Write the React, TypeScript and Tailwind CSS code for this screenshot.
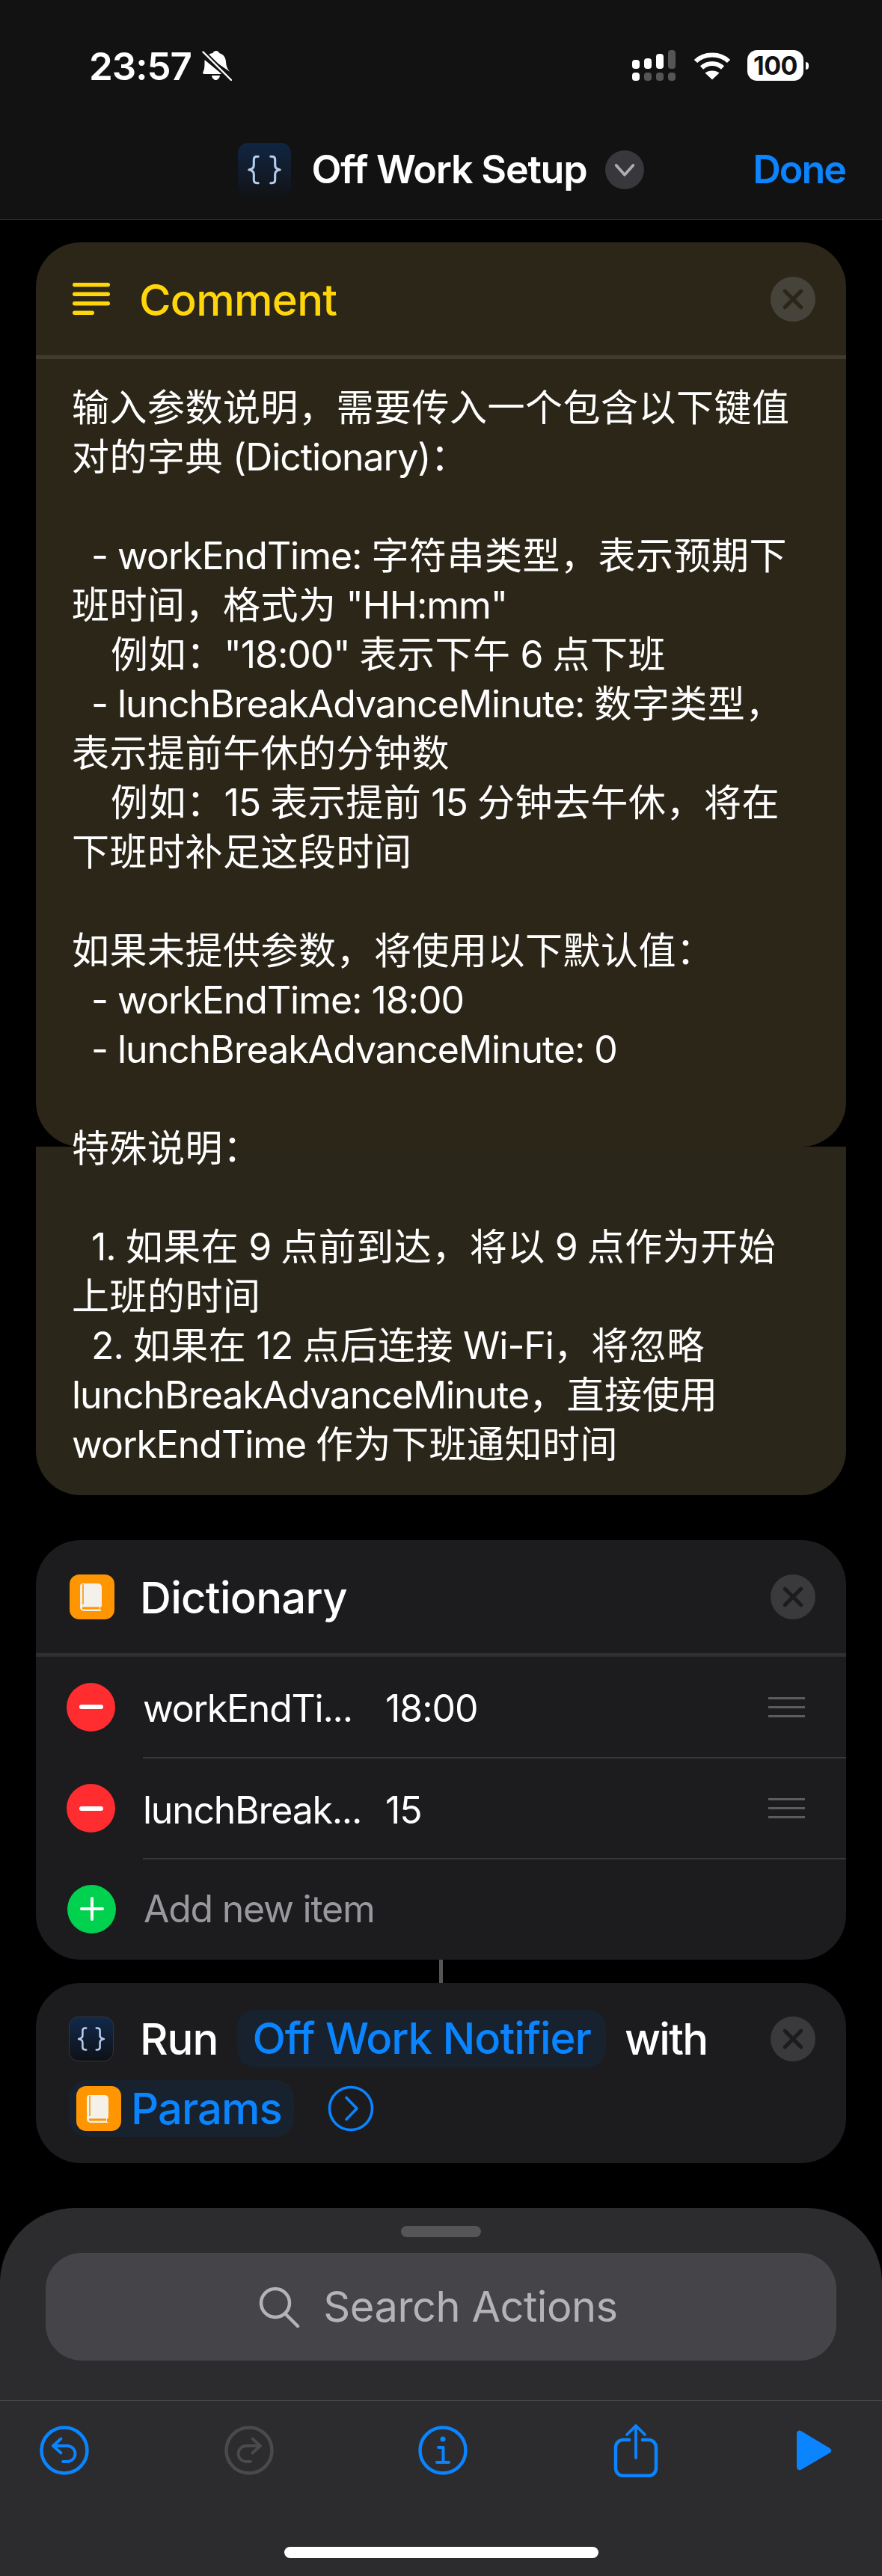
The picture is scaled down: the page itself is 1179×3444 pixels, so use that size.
import React from 'react';

const topLines = [
  '输入参数说明，需要传入一个包含以下键值',
  '对的字典 (Dictionary)：',
  '',
  '  - workEndTime: 字符串类型，表示预期下',
  '班时间，格式为 "HH:mm"',
  '    例如："18:00" 表示下午 6 点下班',
  '  - lunchBreakAdvanceMinute: 数字类型，',
  '表示提前午休的分钟数',
  '    例如：15 表示提前 15 分钟去午休，将在',
  '下班时补足这段时间',
  '',
  '如果未提供参数，将使用以下默认值：',
  '  - workEndTime: 18:00',
  '  - lunchBreakAdvanceMinute: 0',
  '',
];

const bottomLines = [
  '特殊说明：',
  '',
  '  1. 如果在 9 点前到达，将以 9 点作为开始',
  '上班的时间',
  '  2. 如果在 12 点后连接 Wi-Fi，将忽略',
  'lunchBreakAdvanceMinute，直接使用',
  'workEndTime 作为下班通知时间',
];

// Chinese runs sit a little wider than Latin ones in the original font
const TextLine = ({ text }: { text: string }) => (
  <div className="h-[66px] whitespace-pre text-[50px] leading-[66px] text-white">
    {text.split(/([\u3000-\u9fff\uff00-\uffef]+)/).map((part, index) => (
      <span key={index} className={index % 2 === 1 ? 'tracking-[0.5px]' : 'tracking-[-1.05px]'}>
        {part}
      </span>
    ))}
  </div>
);

const CloseButton = ({ circle, cross }: { circle: string; cross: string }) => (
  <div className={`flex h-[60px] w-[60px] shrink-0 items-center justify-center rounded-full ${circle}`}>
    <svg viewBox="0 0 24 24" className="h-[60px] w-[60px]" fill="none" stroke={cross} strokeWidth="2.1" strokeLinecap="round">
      <path d="M7.7 7.7 16.3 16.3M16.3 7.7 7.7 16.3" />
    </svg>
  </div>
);

const BracesIcon = ({ className }: { className: string }) => (
  <div className={`flex items-center justify-center bg-gradient-to-b from-[#10294c] to-[#0e1116] ${className}`}>
    <svg viewBox="0 0 60 60" className="h-full w-full" fill="none" stroke="#b6cdee" strokeWidth="2.6" strokeLinecap="round" strokeLinejoin="round">
      <path d="M23 15h-1.5c-2.4 0-3.5 1.2-3.5 3.5v6.5c0 2.8-1.6 4.4-5.5 5 3.9.6 5.5 2.2 5.5 5v6.500c0 2.300 1.100 3.500 3.500 3.500H23" />
      <path d="M37 15h1.500c2.400 0 3.500 1.200 3.500 3.500v6.500c0 2.800 1.600 4.400 5.500 5-3.900.6-5.500 2.200-5.500 5v6.500c0 2.300-1.100 3.500-3.500 3.500H37" />
    </svg>
  </div>
);

const BookIcon = () => (
  <div className="h-[60px] w-[60px] shrink-0 rounded-[13px] bg-[#ff9500]">
    <svg viewBox="0 0 60 60" className="h-full w-full">
      <path d="M18 12h20a5 5 0 0 1 5 5v24c0 1.500-.8 2.600-2 3v3.500l2 1.500H19a5 5 0 0 1-5-5V16a4 4 0 0 1 4-4z" fill="#f4f0ea" />
      <path d="M18 13v27" stroke="#ff9500" strokeWidth="1.600" />
      <path d="M17 43.500h23v3H17z" fill="#ff9500" />
    </svg>
  </div>
);

const CardRow = ({ label, value, height }: { label: string; value: string; height: string }) => (
  <div className={`flex items-center pl-[41px] pr-[55px] ${height}`}>
    <div className="flex h-[65px] w-[65px] shrink-0 items-center justify-center rounded-full bg-[#ff2d30]">
      <div className="h-[6px] w-[32px] rounded-full bg-white" />
    </div>
    <span className="ml-[37px] w-[324px] pt-[4px] text-[50px] leading-[66px] tracking-[-1.25px] text-white">{label}</span>
    <span className="pt-[4px] text-[50px] leading-[66px] tracking-[-1.05px] text-white">{value}</span>
    <div className="ml-auto flex w-[49px] flex-col gap-[9px]">
      <div className="h-[3px] bg-[#5c5c5e]" />
      <div className="h-[3px] bg-[#5c5c5e]" />
      <div className="h-[3px] bg-[#5c5c5e]" />
    </div>
  </div>
);

const Undo = ({ color, flip }: { color: string; flip?: boolean }) => (
  <svg viewBox="0 0 68 68" className="h-[68px] w-[68px]" fill="none" stroke={color} strokeLinecap="round" strokeLinejoin="round">
    <circle cx="34" cy="34" r="30.500" strokeWidth="4.500" />
    <g strokeWidth="3.800" transform={flip ? 'matrix(-1 0 0 1 68 0)' : undefined}>
      <path d="M19 28H38a10.500 10.500 0 0 1 0 21H32" />
      <path d="M29.500 18.500 19 28l10.500 9.500" />
    </g>
  </svg>
);

const StatusBar = () => (
  <div className="flex h-[41px] items-center pl-[119px] pr-[98px]">
    <span className="relative top-[1px] text-[51px] font-semibold leading-[41px] tracking-[-1px] text-white">23:57</span>
    <svg viewBox="0 0 40 40" className="ml-[14px] h-[40px] w-[40px]" fill="#fff">
      <path d="M19 0c2 0 3.500 1 4 3 6 1.500 8.500 6 9 11 .3 5 1 9 5.500 14L6 6.500C8 5 11 3.500 14.500 3c.5-2 2.500-3 4.500-3zM3.500 12l23 19H3c-1.500 0-2.500-1.700-1.500-3 2-3 2-8 2-16zM13 33h11c-.5 3.500-3 6-5.500 6S13.500 36.500 13 33z" />
      <path d="M1.500 1.500 39 39" stroke="#121212" strokeWidth="6.500" />
      <path d="M1.500 1.500 39 39" stroke="#fff" strokeWidth="2.400" strokeLinecap="round" />
    </svg>
    <div className="ml-auto flex items-center">
      <svg viewBox="0 0 60 41" className="h-[41px] w-[60px]">
        <rect x="0" y="13" width="10" height="12" rx="4" fill="#fff" />
        <rect x="16" y="11" width="10" height="14" rx="4" fill="#fff" />
        <rect x="32" y="5" width="10" height="20" rx="4" fill="#fff" />
        <rect x="48" y="0" width="10" height="25" rx="4" fill="#555" />
        <rect x="0" y="30" width="10" height="11" rx="4" fill="#fff" />
        <rect x="16" y="30" width="10" height="11" rx="4" fill="#555" />
        <rect x="32" y="30" width="10" height="11" rx="4" fill="#555" />
        <rect x="48" y="30" width="10" height="11" rx="4" fill="#555" />
      </svg>
      <svg viewBox="0 0 50 38" className="ml-[22px] h-[38px] w-[50px]" fill="none" stroke="#fff" strokeWidth="6">
        <path d="M3 13C14 1.500 36 1.500 47 13" />
        <path d="M11 21.500C19 14 31 14 39 21.500" />
        <path d="M25 37.500 15.500 28.500c5-4 14-4 19 0z" fill="#fff" stroke="none" />
      </svg>
      <div className="ml-[22px] flex h-[41px] w-[75px] items-center justify-center rounded-[13px] bg-white">
        <span className="text-[34px] font-bold leading-none tracking-[-0.5px] text-[#121212]">100</span>
      </div>
      <div className="ml-[3px] h-[10px] w-[4px] rounded-r-full bg-white" />
    </div>
  </div>
);

const App = () => {
  return (
    <div className="h-[3444px] w-[1179px] overflow-hidden bg-black font-[Inter,'Noto_Sans_CJK_SC',sans-serif]">
      {/* Status bar and title */}
      <header className="h-[294px] border-b border-[#2a2a2b] bg-[#121212] pt-[67px]">
        <StatusBar />
        <div className="mt-[83px] grid grid-cols-[1fr_auto_1fr] items-center">
          <div />
          <div className="flex items-center">
            <BracesIcon className="h-[72px] w-[71px] rounded-[14px] from-[#102543] to-[#111316]" />
            <span className="ml-[27px] text-[52px] font-semibold leading-[72px] tracking-[-1.2px] text-white">Off Work Setup</span>
            <div className="ml-[24px] flex h-[52px] w-[52px] items-center justify-center rounded-full bg-[#38383c]">
              <svg viewBox="0 0 24 24" className="h-[32px] w-[32px]" fill="none" stroke="#aeaeb2" strokeWidth="2.800" strokeLinecap="round" strokeLinejoin="round">
                <path d="M3.500 7.500 12 17l8.500-9.500" />
              </svg>
            </div>
          </div>
          <span className="justify-self-end pr-[49px] text-[52px] font-semibold leading-[72px] tracking-[-2px] text-[#0a84ff]">Done</span>
        </div>
      </header>

      <main className="px-[48px]">
        {/* Comment */}
        <section className="mt-[30px]">
          <div className="rounded-[60px] bg-[#2c2618]">
            <div className="flex h-[151px] items-center pl-[49px] pr-[41px]">
              <svg viewBox="0 0 50 44" className="h-[44px] w-[50px]" fill="#ffd60a">
                <rect x="0" y="0" width="50" height="5.500" rx="2.700" />
                <rect x="0" y="12.500" width="50" height="5.500" rx="2.700" />
                <rect x="0" y="25" width="50" height="5.500" rx="2.700" />
                <rect x="0" y="37.500" width="29" height="5.500" rx="2.700" />
              </svg>
              <span className="ml-[39px] pt-[3px] text-[58px] font-medium leading-[72px] tracking-[-0.7px] text-[#ffd60a]">Comment</span>
              <div className="ml-auto">
                <CloseButton circle="bg-[#46433a]" cross="#2c2618" />
              </div>
            </div>
            <div className="h-[5px] bg-[#3f3b2d]" />
            <div className="px-[48px] pb-[31px] pt-[32px]">
              {topLines.map((line, index) => (
                <TextLine key={index} text={line} />
              ))}
            </div>
          </div>
          <div className="flex flex-col rounded-b-[60px] bg-[#2a2619] px-[48px] pb-[35px]">
            <div className="relative -mt-[31px]">
              {bottomLines.map((line, index) => (
                <TextLine key={index} text={line} />
              ))}
            </div>
          </div>
        </section>

        {/* Dictionary */}
        <section className="mt-[60px] h-[561px] rounded-[60px] bg-[#1c1c1e]">
          <div className="flex h-[151px] items-center pl-[45px] pr-[41px]">
            <BookIcon />
            <span className="ml-[34px] pt-[3px] text-[58px] font-medium leading-[72px] tracking-[-0.7px] text-white">Dictionary</span>
            <div className="ml-auto">
              <CloseButton circle="bg-[#3a3a3c]" cross="#1c1c1e" />
            </div>
          </div>
          <div className="h-[5px] bg-[#2f2f33]" />
          <CardRow label="workEndTi..." value="18:00" height="h-[134px]" />
          <div className="ml-[143px] h-[2px] bg-[#38383a]" />
          <CardRow label="lunchBreak..." value="15" height="h-[133px]" />
          <div className="ml-[143px] h-[2px] bg-[#38383a]" />
          <div className="flex h-[132px] items-center pl-[42px]">
            <div className="flex h-[65px] w-[65px] items-center justify-center rounded-full bg-[#00d14f]">
              <svg viewBox="0 0 32 32" className="h-[32px] w-[32px]" stroke="#fff" strokeWidth="4" strokeLinecap="round">
                <path d="M16 2v28M2 16h28" />
              </svg>
            </div>
            <span className="ml-[37px] text-[50px] leading-[66px] tracking-[-1.25px] text-[#98989e]">Add new item</span>
          </div>
        </section>

        <div className="mx-auto h-[31px] w-[5px] bg-[#555558]" />

        {/* Run workflow */}
        <section className="h-[241px] rounded-[60px] bg-[#1c1c1e] pl-[44px] pr-[41px] pt-[36px]">
          <div className="flex h-[77px] items-center">
            <BracesIcon className="h-[60px] w-[60px] rounded-[13px] border border-[#33353a]" />
            <span className="ml-[35px] text-[58px] font-medium leading-[72px] tracking-[-1px] text-white">Run</span>
            <span className="ml-[26px] rounded-[24px] bg-[#17222e] px-[20px] text-[58px] font-medium leading-[77px] tracking-[-1px] text-[#0a84ff]">
              Off Work Notifier
            </span>
            <span className="ml-[25px] text-[58px] font-medium leading-[72px] tracking-[-1.8px] text-white">with</span>
            <div className="ml-auto">
              <CloseButton circle="bg-[#3a3a3c]" cross="#1c1c1e" />
            </div>
          </div>
          <div className="mt-[17px] flex h-[76px] items-center">
            <div className="flex h-[76px] items-center rounded-[24px] bg-[#17222e] pl-[10px] pr-[16px]">
              <BookIcon />
              <span className="ml-[13px] text-[58px] font-medium leading-[72px] tracking-[-1px] text-[#0a84ff]">Params</span>
            </div>
            <svg viewBox="0 0 62 62" className="ml-[45px] h-[62px] w-[62px]" fill="none" stroke="#0a84ff" strokeWidth="3.600" strokeLinecap="round" strokeLinejoin="round">
              <circle cx="31" cy="31" r="28.500" />
              <path d="M25 16.500 39 31 25 45.500" />
            </svg>
          </div>
        </section>
      </main>

      {/* Bottom sheet */}
      <section className="mt-[60px] h-[492px] rounded-t-[100px] bg-[#2c2c2e] pt-[24px]">
        <div className="mx-auto h-[15px] w-[107px] rounded-full bg-[#555557]" />
        <div className="mx-[61px] mt-[21px] flex h-[144px] items-center justify-center rounded-[48px] bg-[#444449] pr-[8px]">
          <svg viewBox="0 0 56 56" className="h-[56px] w-[56px]" fill="none" stroke="#b4b4b8" strokeWidth="4.500" strokeLinecap="round">
            <circle cx="23" cy="23" r="19" />
            <path d="M36 37 53 54" />
          </svg>
          <span className="ml-[31px] text-[56px] leading-[72px] tracking-[-0.5px] text-[#b4b4b8]">Search Actions</span>
        </div>

        <div className="mt-[53px] h-[1px] bg-[#4a4a4c]" />

        <div className="flex items-center pl-[52px] pt-[30px]">
          <Undo color="#0a84ff" />
          <div className="ml-[179px]">
            <Undo color="#4a4a4c" flip />
          </div>
          <svg viewBox="0 0 68 68" className="ml-[191px] h-[68px] w-[68px]" fill="none" stroke="#0a84ff" strokeLinecap="round" strokeLinejoin="round">
            <circle cx="34" cy="34" r="30.500" strokeWidth="4.500" />
            <circle cx="34" cy="19" r="3.600" fill="#0a84ff" stroke="none" />
            <path d="M28 30h6.500v20M26 50h16" strokeWidth="4" />
          </svg>
          <svg viewBox="0 0 60 72" className="ml-[194px] h-[72px] w-[60px]" fill="none" stroke="#0a84ff" strokeWidth="4.500" strokeLinecap="round" strokeLinejoin="round">
            <path d="M21 22h-8a10 10 0 0 0-10 10v28a10 10 0 0 0 10 10h34a10 10 0 0 0 10-10V32a10 10 0 0 0-10-10h-8" />
            <path d="M30 46V3M18 15 30 3l12 12" strokeWidth="3.800" />
          </svg>
          <svg viewBox="0 0 48 54" className="ml-[184px] h-[54px] w-[48px]" fill="#0a84ff">
            <path d="M1 5C1 1 4-.5 7.500 1.500L45 24c3 2 3 4.500 0 6.500L7.500 52.500C4 54.500 1 53 1 49z" />
          </svg>
        </div>

        <div className="mx-auto mt-[93px] h-[15px] w-[420px] rounded-full bg-white" />
      </section>
    </div>
  );
};

export default App;
